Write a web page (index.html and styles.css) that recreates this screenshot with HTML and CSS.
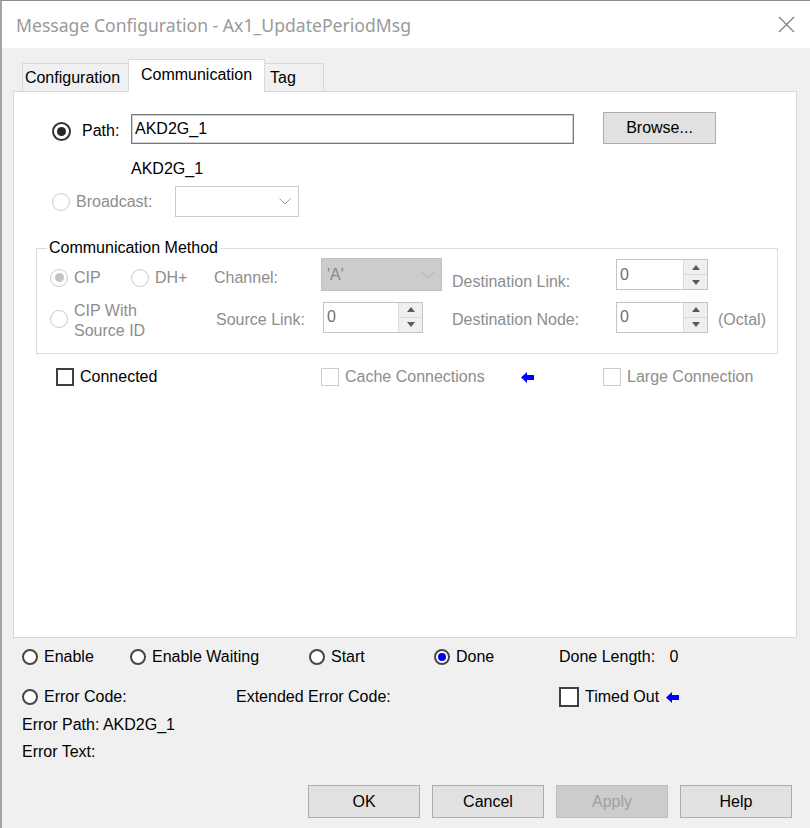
FILE: index.html
```html
<!DOCTYPE html>
<html lang="en">
<head>
    <meta charset="UTF-8">
    <title>Message Configuration - Ax1_UpdatePeriodMsg</title>
    <link rel="stylesheet" href="styles.css">
</head>
<body>
    <div class="window">
        <div class="titlebar">
            <span class="title">Message Configuration - Ax1_UpdatePeriodMsg</span>
            <svg class="close" width="17" height="17" viewBox="0 0 17 17"><path d="M1 1L16 16M16 1L1 16" stroke="#7d7d7d" stroke-width="1.2"/></svg>
        </div>

        <div class="dialog">
            <div class="tabs">
                <div class="tab tab-config">Configuration</div>
                <div class="tab tab-comm active">Communication</div>
                <div class="tab tab-tag">Tag</div>
            </div>

            <div class="panel">
                <div class="path-row">
                    <span class="radio checked"><i></i></span>
                    <span class="path-label">Path:</span>
                    <div class="path-input">AKD2G_1</div>
                    <div class="btn browse">Browse...</div>
                </div>
                <div class="path-value">AKD2G_1</div>

                <div class="broadcast-row">
                    <span class="radio disabled"></span>
                    <span class="broadcast-label muted">Broadcast:</span>
                    <div class="combo">
                        <svg width="12" height="7" viewBox="0 0 12 7"><path d="M0.5 0.5L6 6L11.5 0.5" fill="none" stroke="#9c9c9c"/></svg>
                    </div>
                </div>

                <fieldset class="method">
                    <legend>Communication Method</legend>
                    <div class="method-row">
                        <div class="opt cell-cip low"><span class="radio disabled checked"><i></i></span><span class="muted">CIP</span></div>
                        <div class="opt cell-dh low"><span class="radio disabled"></span><span class="muted">DH+</span></div>
                        <span class="field-label low muted">Channel:</span>
                        <div class="combo combo-off">
                            <span>'A'</span>
                            <svg width="14" height="8" viewBox="0 0 14 8"><path d="M0.5 0.5L7 7L13.5 0.5" fill="none" stroke="#b3b3b3"/></svg>
                        </div>
                        <span class="dest-label lower muted">Destination Link:</span>
                        <div class="spin spin-dest">
                            <span class="spin-value">0</span>
                            <span class="spin-btns"><b class="up"></b><b class="down"></b></span>
                        </div>
                    </div>
                    <div class="method-row row-two">
                        <div class="opt cell-source"><span class="radio disabled"></span><span class="muted two-line">CIP With<br>Source ID</span></div>
                        <span class="field-label low muted">Source Link:</span>
                        <div class="spin spin-source">
                            <span class="spin-value">0</span>
                            <span class="spin-btns"><b class="up"></b><b class="down"></b></span>
                        </div>
                        <span class="dest-label wide low muted">Destination Node:</span>
                        <div class="spin spin-dest">
                            <span class="spin-value">0</span>
                            <span class="spin-btns"><b class="up"></b><b class="down"></b></span>
                        </div>
                        <span class="octal low muted">(Octal)</span>
                    </div>
                </fieldset>

                <div class="options-row">
                    <div class="opt cell-connected"><span class="check"></span>Connected</div>
                    <div class="opt cell-cache"><span class="check disabled"></span><span class="muted">Cache Connections</span></div>
                    <svg class="arrow" width="13" height="11" viewBox="0 0 13 11"><path d="M0 5.5L6 0V3H13V8H6V11Z" fill="#0000ff"/></svg>
                    <div class="opt cell-large"><span class="check disabled"></span><span class="muted">Large Connection</span></div>
                </div>
            </div>

            <div class="status">
                <div class="status-row">
                    <div class="opt st-enable"><span class="dot"></span>Enable</div>
                    <div class="opt st-waiting"><span class="dot"></span>Enable Waiting</div>
                    <div class="opt st-start"><span class="dot"></span>Start</div>
                    <div class="opt st-done"><span class="dot on"></span>Done</div>
                    <div class="done-length">Done Length: <span class="num">0</span></div>
                </div>
                <div class="status-row second">
                    <div class="opt st-error"><span class="dot"></span>Error Code:</div>
                    <div class="st-extended">Extended Error Code:</div>
                    <div class="opt"><span class="check big"></span>Timed Out</div>
                    <svg class="arrow timed" width="13" height="11" viewBox="0 0 13 11"><path d="M0 5.5L6 0V3H13V8H6V11Z" fill="#0000ff"/></svg>
                </div>
                <div class="error-line">Error Path: AKD2G_1</div>
                <div class="error-line last">Error Text:</div>
            </div>

            <div class="buttons">
                <div class="btn">OK</div>
                <div class="btn">Cancel</div>
                <div class="btn disabled">Apply</div>
                <div class="btn">Help</div>
            </div>
        </div>
    </div>
</body>
</html>
```

FILE: styles.css
```css
* {
    box-sizing: border-box;
    margin: 0;
    padding: 0;
}

body {
    width: 810px;
    height: 828px;
    overflow: hidden;
    background: #f0f0f0;
    font-family: "Liberation Sans", Arial, sans-serif;
    font-size: 16px;
    color: #000;
}

.window {
    height: 828px;
    border-left: 2px solid #a3a3a3;
    border-top: 1px solid #8f8f8f;
    display: flex;
    flex-direction: column;
}

/* title bar */
.titlebar {
    height: 47px;
    background: #fff;
    display: flex;
    align-items: center;
    justify-content: space-between;
    padding: 0 15px 0 14px;
}

.title {
    font-family: "Noto Sans", sans-serif;
    font-size: 17.6px;
    color: #9a9a9a;
}

.dialog {
    flex: 1;
    padding: 11px 13px 0 11px;
}

/* tabs */
.tabs {
    display: flex;
    align-items: flex-end;
    height: 32px;
    padding-left: 9px;
}

.tab {
    height: 28px;
    border: 1px solid #d9d9d9;
    border-bottom: none;
    display: flex;
    align-items: center;
    justify-content: center;
}

.tab + .tab {
    margin-left: -1px;
}

.tab-config { width: 107px; padding-right: 6px; }
.tab-comm { width: 137px; }
.tab-tag { width: 60px; padding-right: 22px; }

.tab.active {
    height: 33px;
    background: #fff;
    margin-bottom: -1px;
    padding-bottom: 3px;
    position: relative;
    z-index: 1;
}

.panel {
    height: 547px;
    background: #fff;
    border: 1px solid #d9d9d9;
    padding-top: 20px;
}

.muted {
    color: #8d8d8d;
}

/* radios and checkboxes */
.radio {
    width: 18px;
    height: 18px;
    border-radius: 50%;
    border: 1px solid #cacaca;
    background: #fff;
    display: flex;
    align-items: center;
    justify-content: center;
    flex-shrink: 0;
}

.radio.checked {
    width: 19px;
    height: 19px;
    border: 2px solid #333;
}

.radio.checked i {
    width: 9px;
    height: 9px;
    border-radius: 50%;
    background: #262626;
}

.radio.disabled.checked {
    width: 18px;
    height: 18px;
    border: 1px solid #cacaca;
}

.radio.disabled.checked i {
    background: #c4c4c4;
}

.check {
    width: 18px;
    height: 18px;
    border: 2px solid #404040;
    background: #fff;
    flex-shrink: 0;
    margin-right: 6px;
}

.check.disabled {
    border: 1px solid #cccccc;
}

.check.big {
    width: 20px;
    height: 20px;
}

.opt {
    display: flex;
    align-items: center;
}

.opt .radio {
    margin-right: 6px;
}

/* path / broadcast */
.path-row {
    display: flex;
    align-items: center;
    height: 32px;
    padding-left: 38px;
}

.path-row .radio {
    margin: 6px 11px 0 0;
}

.path-label {
    width: 49px;
    padding-top: 6px;
}

.path-input {
    width: 443px;
    height: 30px;
    margin-top: 2px;
    border: 1px solid #7a7a7a;
    box-shadow: inset 0 0 0 1px #d0d0d0;
    padding-left: 3px;
    display: flex;
    align-items: center;
}

.btn {
    width: 112px;
    height: 33px;
    background: #e1e1e1;
    border: 1px solid #adadad;
    display: flex;
    align-items: center;
    justify-content: center;
}

.btn.browse {
    width: 113px;
    height: 32px;
    margin-left: 29px;
}

.btn.disabled {
    background: #cccccc;
    border-color: #bfbfbf;
    color: #a0a0a0;
}

.path-value {
    margin: 15px 0 0 117px;
    line-height: 20px;
}

.broadcast-row {
    display: flex;
    align-items: center;
    height: 31px;
    margin-top: 7px;
    padding-left: 38px;
}

.broadcast-row .radio {
    margin-right: 6px;
}

.broadcast-label {
    width: 99px;
}

.combo {
    width: 124px;
    height: 31px;
    border: 1px solid #cccccc;
    background: #fff;
    display: flex;
    align-items: center;
    justify-content: flex-end;
    padding-right: 7px;
}

.combo-off {
    width: 121px;
    height: 33px;
    background: #cccccc;
    border-color: #c2c2c2;
    justify-content: space-between;
    padding: 0 6px 0 5px;
    color: #8a8a8a;
}

/* communication method group */
.method {
    margin: 21px 0 0 22px;
    width: 742px;
    border: 1px solid #dcdcdc;
    padding: 0 0 19px 0;
}

.method legend {
    margin-left: 10px;
    padding: 0 2px;
    line-height: 20px;
}

.method-row {
    display: flex;
    align-items: center;
    height: 33px;
    padding-left: 13px;
}

.method-row.row-two {
    height: 34px;
    margin-top: 9px;
}

.method-row .low {
    padding-top: 6px;
}

.method-row .lower {
    padding-top: 14px;
}

.cell-cip { width: 81px; }
.cell-dh { width: 83px; }
.cell-source { width: 166px; padding-top: 4px; }

.two-line {
    line-height: 20px;
    margin-top: 4px;
}

.field-label {
    width: 107px;
}

.dest-label {
    width: 164px;
    margin-left: 10px;
}

.dest-label.wide {
    margin-left: 29px;
}

.spin {
    height: 31px;
    border: 1px solid #c4c4c4;
    background: #fff;
    display: flex;
}

.spin-dest { width: 92px; }
.spin-source { width: 100px; }

.spin-value {
    flex: 1;
    padding-left: 3px;
    display: flex;
    align-items: center;
    color: #6f6f6f;
}

.spin-btns {
    width: 24px;
    display: flex;
    flex-direction: column;
    gap: 1px;
    border-left: 1px solid #dadada;
    background: #dadada;
}

.spin-btns b {
    flex: 1;
    background: #efefef;
    display: flex;
    align-items: center;
    justify-content: center;
}

.spin-btns b::after {
    content: "";
    border-left: 4px solid transparent;
    border-right: 4px solid transparent;
}

.spin-btns .up::after {
    border-bottom: 5px solid #5a5a5a;
}

.spin-btns .down::after {
    border-top: 5px solid #5a5a5a;
}

.octal {
    margin-left: 10px;
}

.options-row {
    display: flex;
    align-items: center;
    height: 20px;
    margin-top: 13px;
    padding-left: 42px;
}

.cell-connected { width: 265px; }
.cell-cache { width: 200px; }
.cell-large { margin-left: 69px; }

.arrow {
    display: block;
}

/* status area */
.status {
    padding-left: 9px;
    margin-top: 9px;
}

.status-row {
    display: flex;
    align-items: center;
    height: 20px;
}

.status-row.second {
    margin-top: 20px;
}

.dot {
    width: 16px;
    height: 16px;
    border-radius: 50%;
    border: 2px solid #474747;
    background: #fff;
    margin-right: 6px;
    display: flex;
    align-items: center;
    justify-content: center;
}

.dot.on::after {
    content: "";
    width: 8px;
    height: 8px;
    border-radius: 50%;
    background: #0000e6;
}

.st-enable { width: 108px; }
.st-waiting { width: 179px; }
.st-start { width: 125px; }
.st-done { width: 125px; }
.st-error { width: 214px; }
.st-extended { width: 323px; }

.done-length .num {
    margin-left: 10px;
}

.arrow.timed {
    margin-left: 7px;
}

.error-line {
    line-height: 20px;
    margin-top: 8px;
}

.error-line.last {
    margin-top: 7px;
}

.buttons {
    display: flex;
    justify-content: flex-end;
    gap: 12px;
    margin-top: 23px;
    padding-right: 5px;
}
```
